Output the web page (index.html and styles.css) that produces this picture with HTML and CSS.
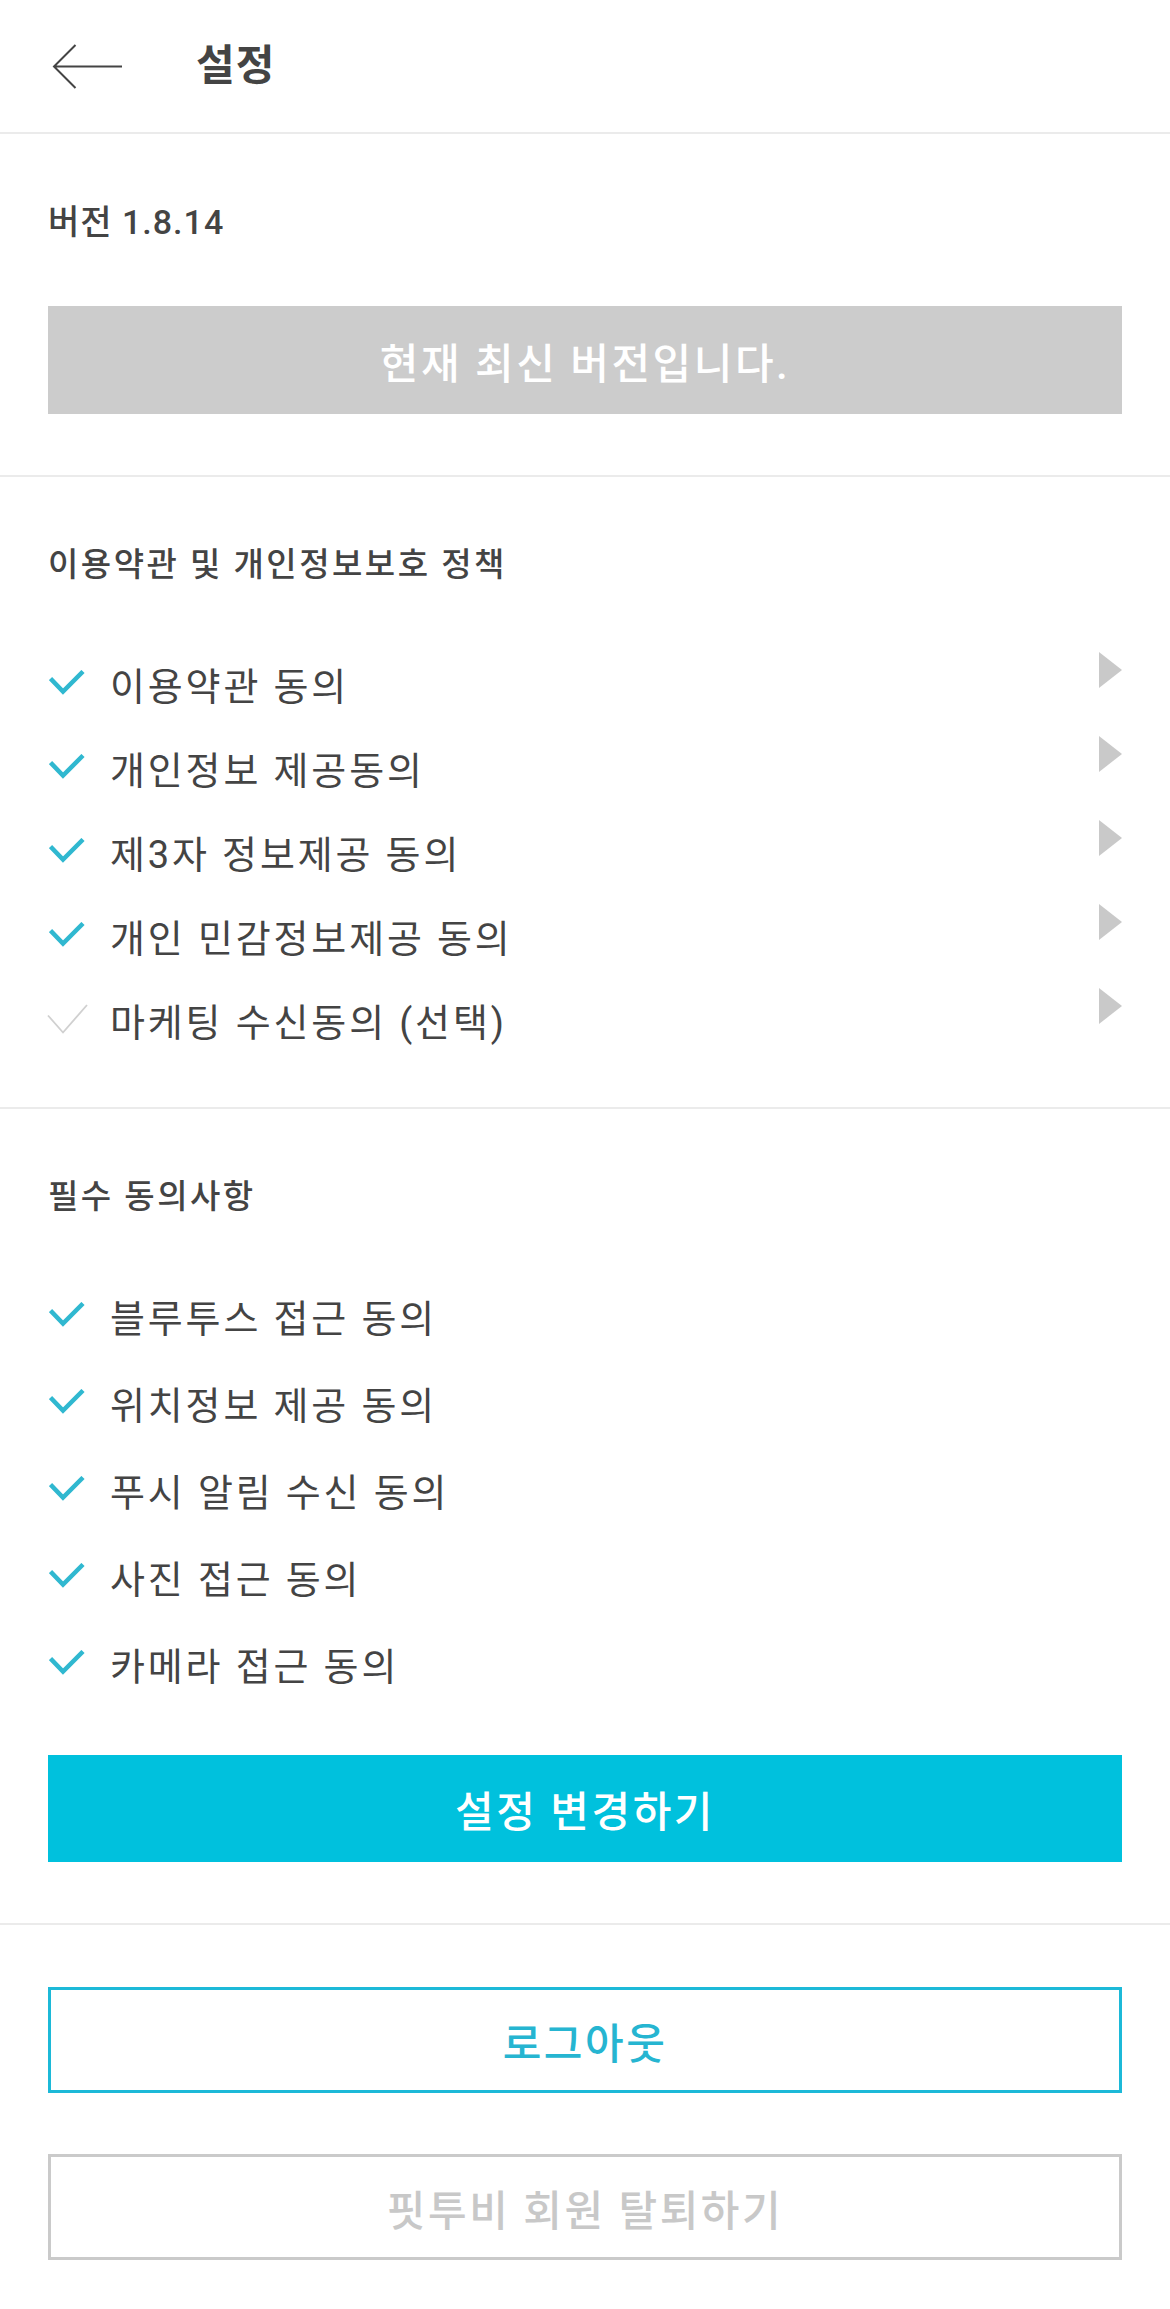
FILE: index.html
```html
<!DOCTYPE html>
<html lang="ko">
<head>
    <meta charset="UTF-8">
    <meta name="viewport" content="width=device-width, initial-scale=1.0">
    <title>설정</title>
    <link rel="stylesheet" href="styles.css">
</head>
<body>
    <header class="topbar">
        <a class="back" href="#">
            <svg width="70" height="45" viewBox="0 0 70 45">
                <path d="M70 22.5H2M23.5 1L2 22.5L23.5 44" fill="none" stroke="#444" stroke-width="2"/>
            </svg>
        </a>
        <h1 class="topbar-title">설정</h1>
    </header>

    <!-- 버전 정보 -->
    <section class="block block-version">
        <p class="version">버전 1.8.14</p>
        <button class="btn btn-gray" disabled>현재 최신 버전입니다.</button>
    </section>

    <!-- 이용약관 -->
    <section class="block block-terms">
        <h2 class="block-title">이용약관 및 개인정보보호 정책</h2>
        <ul class="agree-list terms-list">
            <li class="agree-item">
                <span class="check"><svg class="check-on" width="36" height="25" viewBox="0 0 36 25"><path d="M1.5 8.5L14 21.5L34 1.5"/></svg></span>
                <span class="agree-text">이용약관 동의</span>
                <span class="more"></span>
            </li>
            <li class="agree-item">
                <span class="check"><svg class="check-on" width="36" height="25" viewBox="0 0 36 25"><path d="M1.5 8.5L14 21.5L34 1.5"/></svg></span>
                <span class="agree-text">개인정보 제공동의</span>
                <span class="more"></span>
            </li>
            <li class="agree-item">
                <span class="check"><svg class="check-on" width="36" height="25" viewBox="0 0 36 25"><path d="M1.5 8.5L14 21.5L34 1.5"/></svg></span>
                <span class="agree-text">제3자 정보제공 동의</span>
                <span class="more"></span>
            </li>
            <li class="agree-item">
                <span class="check"><svg class="check-on" width="36" height="25" viewBox="0 0 36 25"><path d="M1.5 8.5L14 21.5L34 1.5"/></svg></span>
                <span class="agree-text">개인 민감정보제공 동의</span>
                <span class="more"></span>
            </li>
            <li class="agree-item">
                <span class="check"><svg class="check-off" width="41" height="30" viewBox="0 0 41 30"><path d="M1 11.5L16 28.5L40 1"/></svg></span>
                <span class="agree-text">마케팅 수신동의 (선택)</span>
                <span class="more"></span>
            </li>
        </ul>
    </section>

    <!-- 필수 동의 -->
    <section class="block block-required">
        <h2 class="block-title">필수 동의사항</h2>
        <ul class="agree-list required-list">
            <li class="agree-item">
                <span class="check"><svg class="check-on" width="36" height="25" viewBox="0 0 36 25"><path d="M1.5 8.5L14 21.5L34 1.5"/></svg></span>
                <span class="agree-text">블루투스 접근 동의</span>
            </li>
            <li class="agree-item">
                <span class="check"><svg class="check-on" width="36" height="25" viewBox="0 0 36 25"><path d="M1.5 8.5L14 21.5L34 1.5"/></svg></span>
                <span class="agree-text">위치정보 제공 동의</span>
            </li>
            <li class="agree-item">
                <span class="check"><svg class="check-on" width="36" height="25" viewBox="0 0 36 25"><path d="M1.5 8.5L14 21.5L34 1.5"/></svg></span>
                <span class="agree-text">푸시 알림 수신 동의</span>
            </li>
            <li class="agree-item">
                <span class="check"><svg class="check-on" width="36" height="25" viewBox="0 0 36 25"><path d="M1.5 8.5L14 21.5L34 1.5"/></svg></span>
                <span class="agree-text">사진 접근 동의</span>
            </li>
            <li class="agree-item">
                <span class="check"><svg class="check-on" width="36" height="25" viewBox="0 0 36 25"><path d="M1.5 8.5L14 21.5L34 1.5"/></svg></span>
                <span class="agree-text">카메라 접근 동의</span>
            </li>
        </ul>
        <button class="btn btn-primary">설정 변경하기</button>
    </section>

    <!-- 계정 -->
    <section class="block block-account">
        <button class="btn btn-outline">로그아웃</button>
        <button class="btn btn-leave">핏투비 회원 탈퇴하기</button>
    </section>
</body>
</html>
```

FILE: styles.css
```css
body {
    margin: 0;
    padding: 0;
    background: #fff;
    font-family: Roboto, "Noto Sans CJK KR", sans-serif;
    color: #444;
}
.topbar {
    display: flex;
    align-items: center;
    height: 132px;
    padding-left: 52px;
    border-bottom: 2px solid #ebebeb;
}
.back {
    display: flex;
}
.topbar-title {
    margin: 0 0 0 74px;
    font-size: 42px;
    font-weight: 700;
    line-height: 1;
    letter-spacing: 1px;
    color: #444;
}
.block {
    padding: 68px 48px 61px;
    border-bottom: 2px solid #ebebeb;
}
.block-terms {
    padding-bottom: 42px;
}
.block-account {
    padding-top: 62px;
    padding-bottom: 49px;
    border-bottom: none;
}
.version {
    margin: 0;
    font-size: 34px;
    font-weight: 500;
    line-height: 40px;
    letter-spacing: 1px;
}
.block-title {
    margin: 0;
    font-size: 33px;
    font-weight: 500;
    line-height: 40px;
    letter-spacing: 0.075em;
}
.agree-list {
    list-style: none;
    margin: 0;
    padding: 0;
}
.terms-list {
    margin-top: 60px;
}
.required-list {
    margin-top: 58px;
}
.agree-item {
    display: flex;
    align-items: center;
    height: 84px;
    font-size: 38px;
}
.required-list .agree-item {
    height: 87px;
}
.check {
    display: flex;
    align-items: center;
    width: 62px;
    flex-shrink: 0;
}
.check svg {
    margin-top: -9px;
}
.check-on {
    margin-left: 1px;
    fill: none;
    stroke: #30b8d0;
    stroke-width: 4.5;
}
.check-off {
    margin-left: -1px;
    fill: none;
    stroke: #d0d0d0;
    stroke-width: 1.8;
}
.agree-text {
    flex: 1;
    line-height: 44px;
    letter-spacing: 0.075em;
}
.more {
    align-self: flex-start;
    margin-top: 7px;
    width: 0;
    height: 0;
    border-left: 23px solid #c9c9c9;
    border-top: 18px solid transparent;
    border-bottom: 18px solid transparent;
}
.btn {
    display: block;
    width: 100%;
    margin: 0;
    padding: 0;
    font-family: inherit;
    font-size: 42px;
    font-weight: 500;
    letter-spacing: 0.06em;
    cursor: pointer;
    box-sizing: border-box;
}
.btn-gray {
    margin-top: 64px;
    height: 108px;
    background: #cccccc;
    border: none;
    color: #fff;
    cursor: default;
}
.btn-primary {
    margin-top: 45px;
    height: 107px;
    background: #00c1dd;
    border: none;
    color: #fff;
}
.btn-outline {
    height: 106px;
    background: #fff;
    border: 3px solid #1cb9d8;
    color: #26b5d1;
}
.btn-leave {
    margin-top: 61px;
    height: 106px;
    background: #fff;
    border: 3px solid #cacaca;
    color: #c8c8c8;
}
```
